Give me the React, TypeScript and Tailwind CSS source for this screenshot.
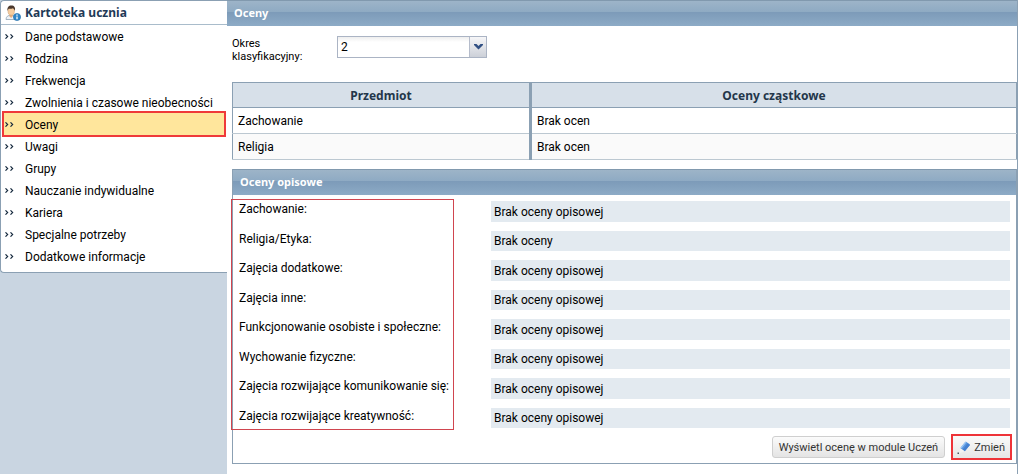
import { useState } from "react";

interface MenuEntry {
  label: string;
  href: string;
}

const menuItems: MenuEntry[] = [
  { label: "Dane podstawowe", href: "#dane" },
  { label: "Rodzina", href: "#rodzina" },
  { label: "Frekwencja", href: "#frekwencja" },
  { label: "Zwolnienia i czasowe nieobecności", href: "#zwolnienia" },
  { label: "Oceny", href: "#oceny" },
  { label: "Uwagi", href: "#uwagi" },
  { label: "Grupy", href: "#grupy" },
  { label: "Nauczanie indywidualne", href: "#nauczanie" },
  { label: "Kariera", href: "#kariera" },
  { label: "Specjalne potrzeby", href: "#potrzeby" },
  { label: "Dodatkowe informacje", href: "#informacje" },
];

const grades = [
  { subject: "Zachowanie", value: "Brak ocen" },
  { subject: "Religia", value: "Brak ocen" },
];

const descriptive = [
  { label: "Zachowanie:", value: "Brak oceny opisowej" },
  { label: "Religia/Etyka:", value: "Brak oceny" },
  { label: "Zajęcia dodatkowe:", value: "Brak oceny opisowej" },
  { label: "Zajęcia inne:", value: "Brak oceny opisowej" },
  { label: "Funkcjonowanie osobiste i społeczne:", value: "Brak oceny opisowej" },
  { label: "Wychowanie fizyczne:", value: "Brak oceny opisowej" },
  { label: "Zajęcia rozwijające komunikowanie się:", value: "Brak oceny opisowej" },
  { label: "Zajęcia rozwijające kreatywność:", value: "Brak oceny opisowej" },
];

function StudentIcon() {
  return (
    <svg width="16" height="16" viewBox="0 0 16 16" className="shrink-0" aria-hidden="true">
      <path d="M1 14.5C1 11.6 3 10.2 6 10.2s4.6 1.4 5 4.3z" fill="#eef2f6" stroke="#8fa3b5" strokeWidth=".8" />
      <path d="M4.6 9.5h3v2l-1.5 1.6-1.5-1.6z" fill="#e8ae7c" />
      <ellipse cx="6.2" cy="6" rx="3.2" ry="4.2" fill="#f6cda0" stroke="#c99866" strokeWidth=".5" />
      <path d="M2.6 6C1.9 2.6 3.6.6 6.4.6c2.9 0 4.2 2 3.5 5.2C9.3 4.4 8.8 3.6 8 3.2c-1.5.7-3.2.6-4.4.5C3 4.3 2.8 5 2.6 6z" fill="#4a382c" />
      <circle cx="12" cy="12" r="3.6" fill="#2f86c9" stroke="#1d69a6" strokeWidth=".6" />
      <path d="M12 9.6v1.2M12 11.5v2.8" stroke="#fff" strokeWidth="1.3" />
    </svg>
  );
}

function Chevrons() {
  return (
    <svg width="9" height="5" viewBox="0 0 9 5" className="shrink-0" aria-hidden="true">
      <path d="M.5.3l2.2 2.2L.5 4.7M5.5.3l2.2 2.2-2.2 2.2" fill="none" stroke="#12263b" strokeWidth="1.1" />
    </svg>
  );
}

function PencilIcon() {
  return (
    <svg width="16" height="16" viewBox="0 0 16 16" className="shrink-0" aria-hidden="true">
      <path d="M4.2 8.2 9 2.2c.4-.5.9-.5 1.4-.2l3 1.9c.5.3.6.8.2 1.3l-4.8 6z" fill="#5a97df" />
      <path d="M6.5 9.7 11.5 3.3l1.9 1.2c.4.3.5.6.2 1.1l-4.8 5.6z" fill="#4580d0" />
      <path d="M5 8 9.8 2.2" stroke="#9cc6f5" strokeWidth="1.2" />
      <path d="M4.2 8.2l4.6 3-5 1.8z" fill="#f3f3f3" />
      <path d="M1.5 12.5H3V14H1.5z" fill="#4c5560" />
    </svg>
  );
}

interface TitleBarProps {
  children: React.ReactNode;
}

function TitleBar({ children }: TitleBarProps) {
  return (
    <h2 className="h-[26px] border-t border-[#8199ae] bg-[linear-gradient(#9db4c8,#8eaac3_45%,#7d9bb9_46%,#8dabc6)] px-[7px] font-['Noto_Sans',sans-serif] text-[11px] leading-[24px] font-bold text-white">
      {children}
    </h2>
  );
}

export default function App() {
  const [active, setActive] = useState("Oceny");
  const [period, setPeriod] = useState("2");

  return (
    <div className="flex min-h-screen bg-[#c9d5e1] font-[Roboto,'Noto_Sans',sans-serif] text-[12px] text-black">
      {/* Sidebar */}
      <aside className="w-[227px] shrink-0">
        <div className="rounded-l-[4px] border border-r-0 border-[#8ba0b3] bg-white pb-[5px]">
          <div className="flex h-6 items-center gap-1 border-b border-[#a9bccb] pl-1">
            <StudentIcon />
            <h1 className="pt-px font-['Noto_Sans',sans-serif] font-bold text-[#1f3a57]">Kartoteka ucznia</h1>
          </div>
          <nav>
            {menuItems.map((item) => {
              const isActive = item.label === active;
              return (
                <a
                  key={item.label}
                  href={item.href}
                  onClick={() => setActive(item.label)}
                  className={`mx-[3px] flex h-[22px] items-center gap-[11px] pl-px ${
                    isActive
                      ? "bg-[#ffe69c] outline-2 outline-[#ef3a3a]"
                      : "hover:bg-[#eef3f8]"
                  }`}
                >
                  <Chevrons />
                  <span className="pt-px">{item.label}</span>
                </a>
              );
            })}
          </nav>
        </div>
      </aside>

      <main className="min-w-0 flex-1 border-r border-[#8ba0b3] bg-white">
        <TitleBar>Oceny</TitleBar>

        <div className="flex items-start gap-5 px-[5px] pt-[10px]">
          <label htmlFor="period" className="w-[85px] pt-px text-[11px] leading-[13px]">
            Okres klasyfikacyjny:
          </label>
          <div className="relative h-[22px] w-[150px]">
            <select
              id="period"
              value={period}
              onChange={(e) => setPeriod(e.target.value)}
              className="h-full w-full appearance-none border border-[#abb4c4] bg-linear-to-b from-[#eeeeee] to-white to-25% pl-[3px]"
            >
              <option>1</option>
              <option>2</option>
            </select>
            <span className="pointer-events-none absolute inset-y-px right-px flex w-[17px] items-center justify-center border-l border-[#b5bccb] bg-linear-to-b from-[#f6f6f8] to-[#ccd0d8]">
              <svg width="9" height="6" viewBox="0 0 9 6" aria-hidden="true">
                <path d="M0 0h2.5l2 2 2-2H9v1L4.5 5.5 0 1z" fill="#304f83" />
              </svg>
            </span>
          </div>
        </div>

        {/* Grades table */}
        <div className="pt-[19px] pl-[5px]">
          <table className="w-full table-fixed border-collapse border-x border-[#8ba0b3]">
            <thead className="font-['Noto_Sans',sans-serif]">
              <tr className="h-[25px] border-y border-[#8ba0b3] bg-[#d7e0e9] text-[#23364a]">
                <th className="w-[38%] border-r-3 border-[#8ba0b3] pt-px">Przedmiot</th>
                <th className="pt-px">Oceny cząstkowe</th>
              </tr>
            </thead>
            <tbody>
              {grades.map((row) => (
                <tr key={row.subject} className="h-[26px] border-b border-[#bcc8d1] even:bg-[#fafafa]">
                  <td className="border-r-3 border-r-[#8ba0b3] pl-[5px]">{row.subject}</td>
                  <td className="pl-[5px]">{row.value}</td>
                </tr>
              ))}
            </tbody>
          </table>
        </div>

        {/* Descriptive grades */}
        <section className="mt-[9px] ml-[5px] border-x border-b border-[#8ba0b3]">
          <TitleBar>Oceny opisowe</TitleBar>
          <div className="relative pt-[6px] pr-[6px] pl-[6px]">
            <div className="pointer-events-none absolute top-[5px] -left-px h-[229px] w-[221px] outline-1 outline-[#d0454f]" />
            <dl className="flex flex-col gap-[9px]">
              {descriptive.map((row) => (
                <div key={row.label} className="flex odd:h-[21px] even:h-[20px]">
                  <dt className="w-[252px] shrink-0 leading-[16px]">{row.label}</dt>
                  <dd className="flex flex-1 items-center bg-[#e3eaf0] pl-[3px]">{row.value}</dd>
                </div>
              ))}
            </dl>
          </div>
          <div className="flex items-center justify-end gap-[6px] pt-[6px] pr-1 pb-[3px]">
            <button className="h-[22px] rounded-[3px] border border-[#cfcfcf] bg-linear-to-b from-[#fbfbfb] to-[#e4e4e4] px-[6px] pt-[2px] text-[11px] text-[#333333]">
              Wyświetl ocenę w module Uczeń
            </button>
            <button className="flex h-[26px] items-center gap-[2px] border-2 border-[#ee3338] bg-linear-to-b from-[#fafafa] to-[#e6e6e6] pt-[2px] pr-[5px] pl-[3px] text-[11px] text-[#333333]">
              <PencilIcon />
              Zmień
            </button>
          </div>
        </section>
      </main>
    </div>
  );
}
